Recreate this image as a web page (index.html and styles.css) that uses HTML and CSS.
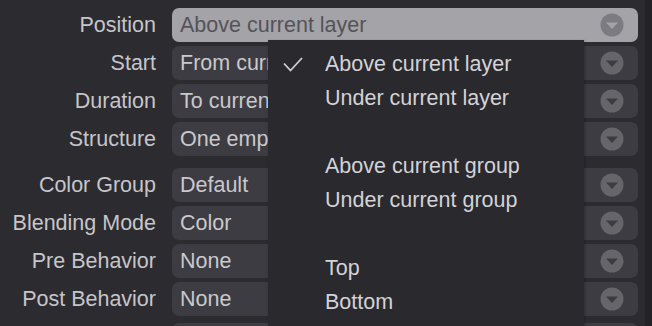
FILE: index.html
```html
<!DOCTYPE html>
<html>
<head>
<meta charset="utf-8">
<link rel="stylesheet" href="styles.css">
</head>
<body>
<div class="panel">
  <div class="form">
    <div class="group">
      <div class="label">Position</div>
      <div class="select active"><span class="value">Above current layer</span><svg class="arrow" viewBox="0 0 24 24"><circle cx="12" cy="12" r="11.5"/><polygon points="6,9.5 18,9.5 12,16"/></svg></div>
      <div class="label">Start</div>
      <div class="select"><span class="value">From current frame</span><svg class="arrow" viewBox="0 0 24 24"><circle cx="12" cy="12" r="11.5"/><polygon points="6,9.5 18,9.5 12,16"/></svg></div>
      <div class="label">Duration</div>
      <div class="select"><span class="value">To current frame</span><svg class="arrow" viewBox="0 0 24 24"><circle cx="12" cy="12" r="11.5"/><polygon points="6,9.5 18,9.5 12,16"/></svg></div>
      <div class="label">Structure</div>
      <div class="select"><span class="value">One empty cel</span><svg class="arrow" viewBox="0 0 24 24"><circle cx="12" cy="12" r="11.5"/><polygon points="6,9.5 18,9.5 12,16"/></svg></div>
    </div>
    <div class="group">
      <div class="label">Color Group</div>
      <div class="select"><span class="value">Default</span><svg class="arrow" viewBox="0 0 24 24"><circle cx="12" cy="12" r="11.5"/><polygon points="6,9.5 18,9.5 12,16"/></svg></div>
      <div class="label">Blending Mode</div>
      <div class="select"><span class="value">Color</span><svg class="arrow" viewBox="0 0 24 24"><circle cx="12" cy="12" r="11.5"/><polygon points="6,9.5 18,9.5 12,16"/></svg></div>
      <div class="label">Pre Behavior</div>
      <div class="select"><span class="value">None</span><svg class="arrow" viewBox="0 0 24 24"><circle cx="12" cy="12" r="11.5"/><polygon points="6,9.5 18,9.5 12,16"/></svg></div>
      <div class="label">Post Behavior</div>
      <div class="select"><span class="value">None</span><svg class="arrow" viewBox="0 0 24 24"><circle cx="12" cy="12" r="11.5"/><polygon points="6,9.5 18,9.5 12,16"/></svg></div>
    </div>
    <div class="group tail">
      <div class="label"></div>
      <div class="select"></div>
    </div>
  </div>
  <div class="strip"></div>
  <div class="menu">
    <div class="item checked"><span class="check"><svg viewBox="0 0 20 16"><polyline points="1,6.5 7.5,13.5 19,1"/></svg></span><span>Above current layer</span></div>
    <div class="item"><span class="check"></span><span>Under current layer</span></div>
    <div class="sep"></div>
    <div class="item"><span class="check"></span><span>Above current group</span></div>
    <div class="item"><span class="check"></span><span>Under current group</span></div>
    <div class="sep"></div>
    <div class="item"><span class="check"></span><span>Top</span></div>
    <div class="item"><span class="check"></span><span>Bottom</span></div>
  </div>
</div>
</body>
</html>
```
FILE: styles.css
```css
html, body {
  margin: 0;
  padding: 0;
  background: #2c2b30;
  overflow: hidden;
}
body {
  width: 652px;
  height: 326px;
  font-family: "Liberation Sans", Arial, sans-serif;
  font-size: 21.5px;
}
.panel {
  position: relative;
  width: 652px;
  height: 326px;
  display: flex;
  overflow: hidden;
}
.form {
  flex: 1;
  padding-top: 8px;
  display: flex;
  flex-direction: column;
  gap: 12px;
}
.group {
  display: grid;
  grid-template-columns: 156px 466px;
  column-gap: 16px;
  row-gap: 4px;
  grid-auto-rows: 34px;
}
.group.tail {
  margin-top: -5px;
}
.label {
  color: #c6c5c9;
  text-align: right;
  display: flex;
  align-items: center;
  justify-content: flex-end;
  white-space: nowrap;
}
.select {
  background: #3d3c42;
  border-radius: 7px;
  display: flex;
  align-items: center;
  justify-content: space-between;
  padding: 0 14px 0 8px;
  color: #c9c8cc;
}
.select.active {
  background: #a4a3a8;
  color: #545358;
}
.value {
  white-space: nowrap;
}
.arrow {
  width: 24px;
  height: 24px;
  flex: none;
}
.arrow circle {
  fill: #666569;
}
.arrow polygon {
  fill: #3d3c42;
}
.active .arrow circle {
  fill: #7c7b81;
}
.active .arrow polygon {
  fill: #a4a3a8;
}
.strip {
  width: 7px;
  background: #232227;
  flex: none;
}
.menu {
  position: absolute;
  left: 268px;
  top: 40px;
  width: 316px;
  height: 300px;
  background: #2a292e;
  padding-top: 7.5px;
  box-sizing: border-box;
  color: #d3d2d6;
  box-shadow: 1px 1px 3px rgba(0,0,0,0.25);
}
.item {
  height: 34px;
  display: flex;
  align-items: center;
  white-space: nowrap;
}
.sep {
  height: 34px;
}
.check {
  width: 57px;
  flex: none;
  display: flex;
  align-items: center;
  padding-left: 15px;
  box-sizing: border-box;
}
.check svg {
  width: 20px;
  height: 16px;
}
.check polyline {
  fill: none;
  stroke: #cfced2;
  stroke-width: 1.8;
}
```
